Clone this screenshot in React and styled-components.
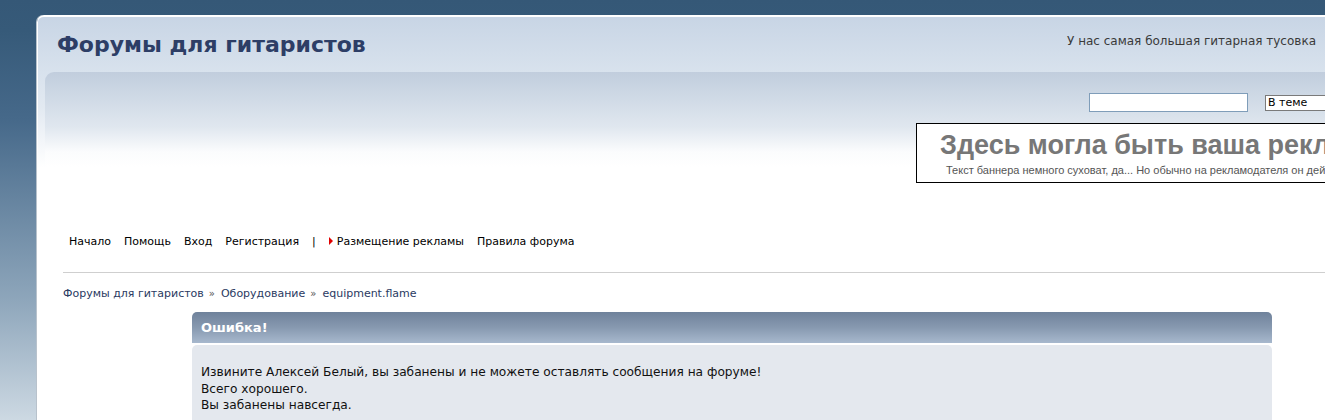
import React from "react";
import styled, { createGlobalStyle } from "styled-components";

const Global = createGlobalStyle`
  html, body { margin: 0; padding: 0; }
  body {
    overflow: hidden;
    min-height: 420px;
    background: linear-gradient(180deg, #355877 0px, #365a79 30px, #46698a 120px, #8ea6bb 300px, #d2dde6 430px);
    font-family: "DejaVu Sans", Verdana, sans-serif;
  }
`;

const Page = styled.div`
  padding: 15px 0 0 37px;
  width: 1403px;
`;

const Container = styled.div`
  border-top: 2px solid #fff;
  border-left: 1px solid #fff;
  box-shadow: -1px 0 0 #b8c2cc;
  border-top-left-radius: 7px;
  background: linear-gradient(180deg, #c8d5e5 0px, #d8e2ed 55px, #e2e9f1 90px, #ffffff 150px);
  min-height: 420px;
`;

const HeaderBar = styled.div`
  height: 55px;
  display: flex;
  align-items: center;
  justify-content: space-between;
  padding: 0 0 0 19px;
`;

const Title = styled.h1`
  margin: 0;
  font-family: "DejaVu Sans", Verdana, sans-serif;
  font-weight: bold;
  font-size: 22px;
  color: #2d3e66;
  margin-top: -1px;
`;

const Tagline = styled.div`
  font-size: 12px;
  color: #3a3a3a;
  width: 373px;
  white-space: nowrap;
  margin-top: -8px;
`;

const HeadPanel = styled.div`
  margin-left: 7px;
  border-top-left-radius: 9px;
  background: linear-gradient(180deg, #c1cddd 0px, #ccd7e4 20px, #e0e7ef 55px, #fbfcfd 80px, #ffffff 95px);
  height: 125px;
  display: flex;
  flex-direction: column;
  align-items: flex-end;
`;

const SearchRow = styled.div`
  display: flex;
  align-items: center;
  gap: 17px;
  margin-top: 21px;
  width: 351px;
`;

const SearchInput = styled.input`
  box-sizing: border-box;
  width: 159px;
  height: 19px;
  border: 1px solid #7f9db9;
  background: #fff;
  padding: 0 3px;
  margin: 0;
`;

const Select = styled.select`
  box-sizing: border-box;
  width: 175px;
  height: 16px;
  border: 1px solid #7a7a7a;
  background: #fff;
  font-family: "DejaVu Sans", Verdana, sans-serif;
  font-size: 11px;
  padding: 0 0 0 2px;
  margin: 0;
  appearance: none;
  color: #000;
  line-height: 14px;
`;

const Banner = styled.div`
  box-sizing: border-box;
  margin-top: 11px;
  width: 468px;
  height: 60px;
  border: 1px solid #000;
  background: #fff;
  margin-right: 56px;
  font-family: "Liberation Sans", Arial, sans-serif;
  overflow: hidden;
  white-space: nowrap;
`;

const BannerTitle = styled.div`
  font-weight: bold;
  font-size: 27px;
  color: #777;
  line-height: 30px;
  margin-top: 6px;
  padding-left: 23px;
`;

const BannerText = styled.div`
  font-size: 11px;
  color: #555;
  line-height: 13px;
  margin-top: 4px;
  padding-left: 29px;
`;

const Nav = styled.nav`
  display: flex;
  align-items: center;
  padding: 32px 0 0 31px;
  height: 24px;
  font-size: 11px;
  color: #000;
`;

const NavItem = styled.span`
  margin-right: 13px;
  display: inline-flex;
  align-items: center;
`;

const Arrow = styled.span`
  width: 0;
  height: 0;
  border-top: 4px solid transparent;
  border-bottom: 4px solid transparent;
  border-left: 4px solid #e00000;
  margin-right: 4px;
`;

const Divider = styled.hr`
  margin: 19px 0 0 25px;
  border: 0;
  border-top: 1px solid #cfcfcf;
  height: 0;
`;

const Crumbs = styled.div`
  padding: 14px 0 0 25px;
  font-size: 11px;
  color: #2a3a62;
  height: 14px;
  line-height: 14px;
`;

const Sep = styled.span`
  margin: 0 6px 0 5px;
  font-size: 10px;
  color: #555;
`;

const ErrorBox = styled.div`
  margin: 11px 0 0 154px;
  width: 1080px;
`;

const ErrorHead = styled.div`
  height: 31px;
  border-radius: 5px 5px 0 0;
  background: linear-gradient(180deg, #6f829b 0%, #8799b0 50%, #a7b8cd 100%);
  color: #fff;
  font-weight: bold;
  font-size: 13px;
  display: flex;
  align-items: center;
  padding-left: 9px;
`;

const ErrorBody = styled.div`
  margin-top: 2px;
  border-radius: 5px 5px 0 0;
  background: #e4e8ee;
  padding: 19px 9px 20px;
  font-size: 12.2px;
  line-height: 16.5px;
  color: #111;
`;

export default function App() {
  return (
    <>
      <Global />
      <Page>
        <Container>
          <HeaderBar>
            <Title>Форумы для гитаристов</Title>
            <Tagline>У нас самая большая гитарная тусовка</Tagline>
          </HeaderBar>
          <HeadPanel>
            <SearchRow>
              <SearchInput type="text" />
              <Select defaultValue="topic">
                <option value="topic">В теме</option>
              </Select>
            </SearchRow>
            <Banner>
              <BannerTitle>Здесь могла быть ваша реклама</BannerTitle>
              <BannerText>Текст баннера немного суховат, да... Но обычно на рекламодателя он действует</BannerText>
            </Banner>
          </HeadPanel>
          <Nav>
            <NavItem>Начало</NavItem>
            <NavItem>Помощь</NavItem>
            <NavItem>Вход</NavItem>
            <NavItem>Регистрация</NavItem>
            <NavItem>|</NavItem>
            <NavItem><Arrow />Размещение рекламы</NavItem>
            <NavItem>Правила форума</NavItem>
          </Nav>
          <Divider />
          <Crumbs>
            Форумы для гитаристов<Sep>»</Sep>Оборудование<Sep>»</Sep>equipment.flame
          </Crumbs>
          <ErrorBox>
            <ErrorHead>Ошибка!</ErrorHead>
            <ErrorBody>
              Извините Алексей Белый, вы забанены и не можете оставлять сообщения на форуме!<br />
              Всего хорошего.<br />
              Вы забанены навсегда.
            </ErrorBody>
          </ErrorBox>
        </Container>
      </Page>
    </>
  );
}
